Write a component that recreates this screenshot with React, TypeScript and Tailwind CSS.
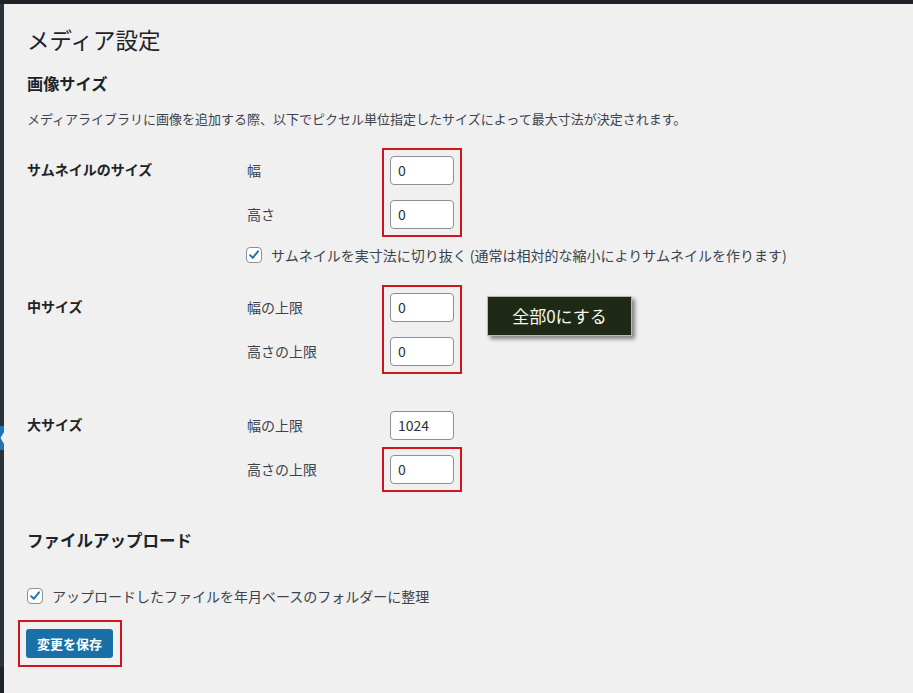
import type { ReactNode } from 'react';

const font = { fontFamily: '"Noto Sans CJK JP", "Noto Sans", sans-serif' };

function Checkbox() {
  return (
    <span className="flex h-4 w-4 shrink-0 items-center justify-center rounded-[4px] border border-[#8c8f94] bg-white">
      <svg viewBox="0 0 16 16" className="h-[14px] w-[14px]">
        <path d="M3.5 8.2 L6.6 11.2 L12.6 3.8" fill="none" stroke="#2271b1" strokeWidth="2.2" strokeLinecap="round" strokeLinejoin="round" />
      </svg>
    </span>
  );
}

function Field({ value }: { value: string }) {
  return (
    <div className="flex h-[29px] w-16 items-center rounded-[4px] border border-[#8c8f94] bg-white pl-[7px] text-[14px] text-[#2c3338]">
      {value}
    </div>
  );
}

function Label({ children }: { children: ReactNode }) {
  return <div className="flex h-[29px] items-center text-[14px] text-[#3c434a]">{children}</div>;
}

function Marked({ children }: { children: ReactNode }) {
  // red annotation frame drawn around the inputs
  return <div className="outline-2 outline-[#d0161c] outline-offset-[6px]">{children}</div>;
}

function SizeSection({ title, labels, fields, extra }: { title: string; labels: string[]; fields: ReactNode; extra?: ReactNode }) {
  return (
    <div className="flex">
      <div className="flex h-[27px] w-[220px] items-center text-[14px] font-bold text-[#1d2327]">{title}</div>
      <div className="flex">
        <div className="flex w-[143px] flex-col gap-[15px]">
          {labels.map(l => <Label key={l}>{l}</Label>)}
        </div>
        {fields}
        {extra}
      </div>
    </div>
  );
}

export default function App() {
  return (
    <div className="flex min-h-[693px] w-[913px] flex-col bg-[#1d2327]" style={font}>
      <div className="h-[4px]" />
      <div className="flex flex-1">
        {/* admin menu edge */}
        <div className="flex w-[4px] flex-col bg-[#2c3338]">
          <div className="h-[422px]" />
          <svg viewBox="0 0 4 24" className="h-6 w-[4px]">
            <rect width="4" height="24" fill="#2271b1" />
            <path d="M4 6 L0.5 12 L4 18 Z" fill="#f0f0f1" />
          </svg>
          <div className="flex-1" />
          <div className="h-[26px] bg-[#1d2327]" />
        </div>

        <div className="flex-1 bg-[#f0f0f1] pl-[23px] pt-[19px] text-[#1d2327]">
          <h1 className="h-8 text-[22.5px] font-normal leading-8">メディア設定</h1>

          <h2 className="mt-4 h-6 text-[16.2px] font-bold leading-6">画像サイズ</h2>
          <p className="mt-[14px] h-5 text-[13px] leading-5 text-[#3c434a]">
            メディアライブラリに画像を追加する際、以下でピクセル単位指定したサイズによって最大寸法が決定されます。
          </p>

          <div className="mt-[27px]">
            <SizeSection
              title="サムネイルのサイズ"
              labels={['幅', '高さ']}
              fields={
                <Marked>
                  <div className="flex flex-col gap-[15px]">
                    <Field value="0" />
                    <Field value="0" />
                  </div>
                </Marked>
              }
            />
            <div className="ml-[219px] mt-[16px] flex h-5 items-center gap-[9px] text-[14px] text-[#3c434a]">
              <Checkbox />
              <span>サムネイルを実寸法に切り抜く (通常は相対的な縮小によりサムネイルを作ります)</span>
            </div>
          </div>

          <div className="mt-[28px]">
            <SizeSection
              title="中サイズ"
              labels={['幅の上限', '高さの上限']}
              fields={
                <Marked>
                  <div className="flex flex-col gap-[15px]">
                    <Field value="0" />
                    <Field value="0" />
                  </div>
                </Marked>
              }
              extra={
                <div className="ml-[33px] mt-[3px] flex h-10 w-[145px] items-center justify-center border border-[#b9bca8] bg-[#1f2a16] text-[17px] text-[#f7f7ee] shadow-[3px_3px_4px_rgba(0,0,0,0.45)]">
                  全部0にする
                </div>
              }
            />
          </div>

          <div className="mt-[45px]">
            <SizeSection
              title="大サイズ"
              labels={['幅の上限', '高さの上限']}
              fields={
                <div className="flex flex-col gap-[15px]">
                  <Field value="1024" />
                  <Marked>
                    <Field value="0" />
                  </Marked>
                </div>
              }
            />
          </div>

          <h2 className="mt-[44px] h-6 text-[16.5px] font-bold leading-6">ファイルアップロード</h2>

          <div className="mt-[34px] flex h-5 items-center gap-[9px] text-[14px] text-[#3c434a]">
            <Checkbox />
            <span>アップロードしたファイルを年月ベースのフォルダーに整理</span>
          </div>

          <div className="mt-[23px] inline-block outline-2 outline-[#d0161c] outline-offset-[7px]">
            <button className="-ml-px flex h-[29px] w-[87px] items-center justify-center rounded-[3px] bg-[#1870a6] text-[13px] font-semibold text-white">
              変更を保存
            </button>
          </div>
        </div>
      </div>
    </div>
  );
}
